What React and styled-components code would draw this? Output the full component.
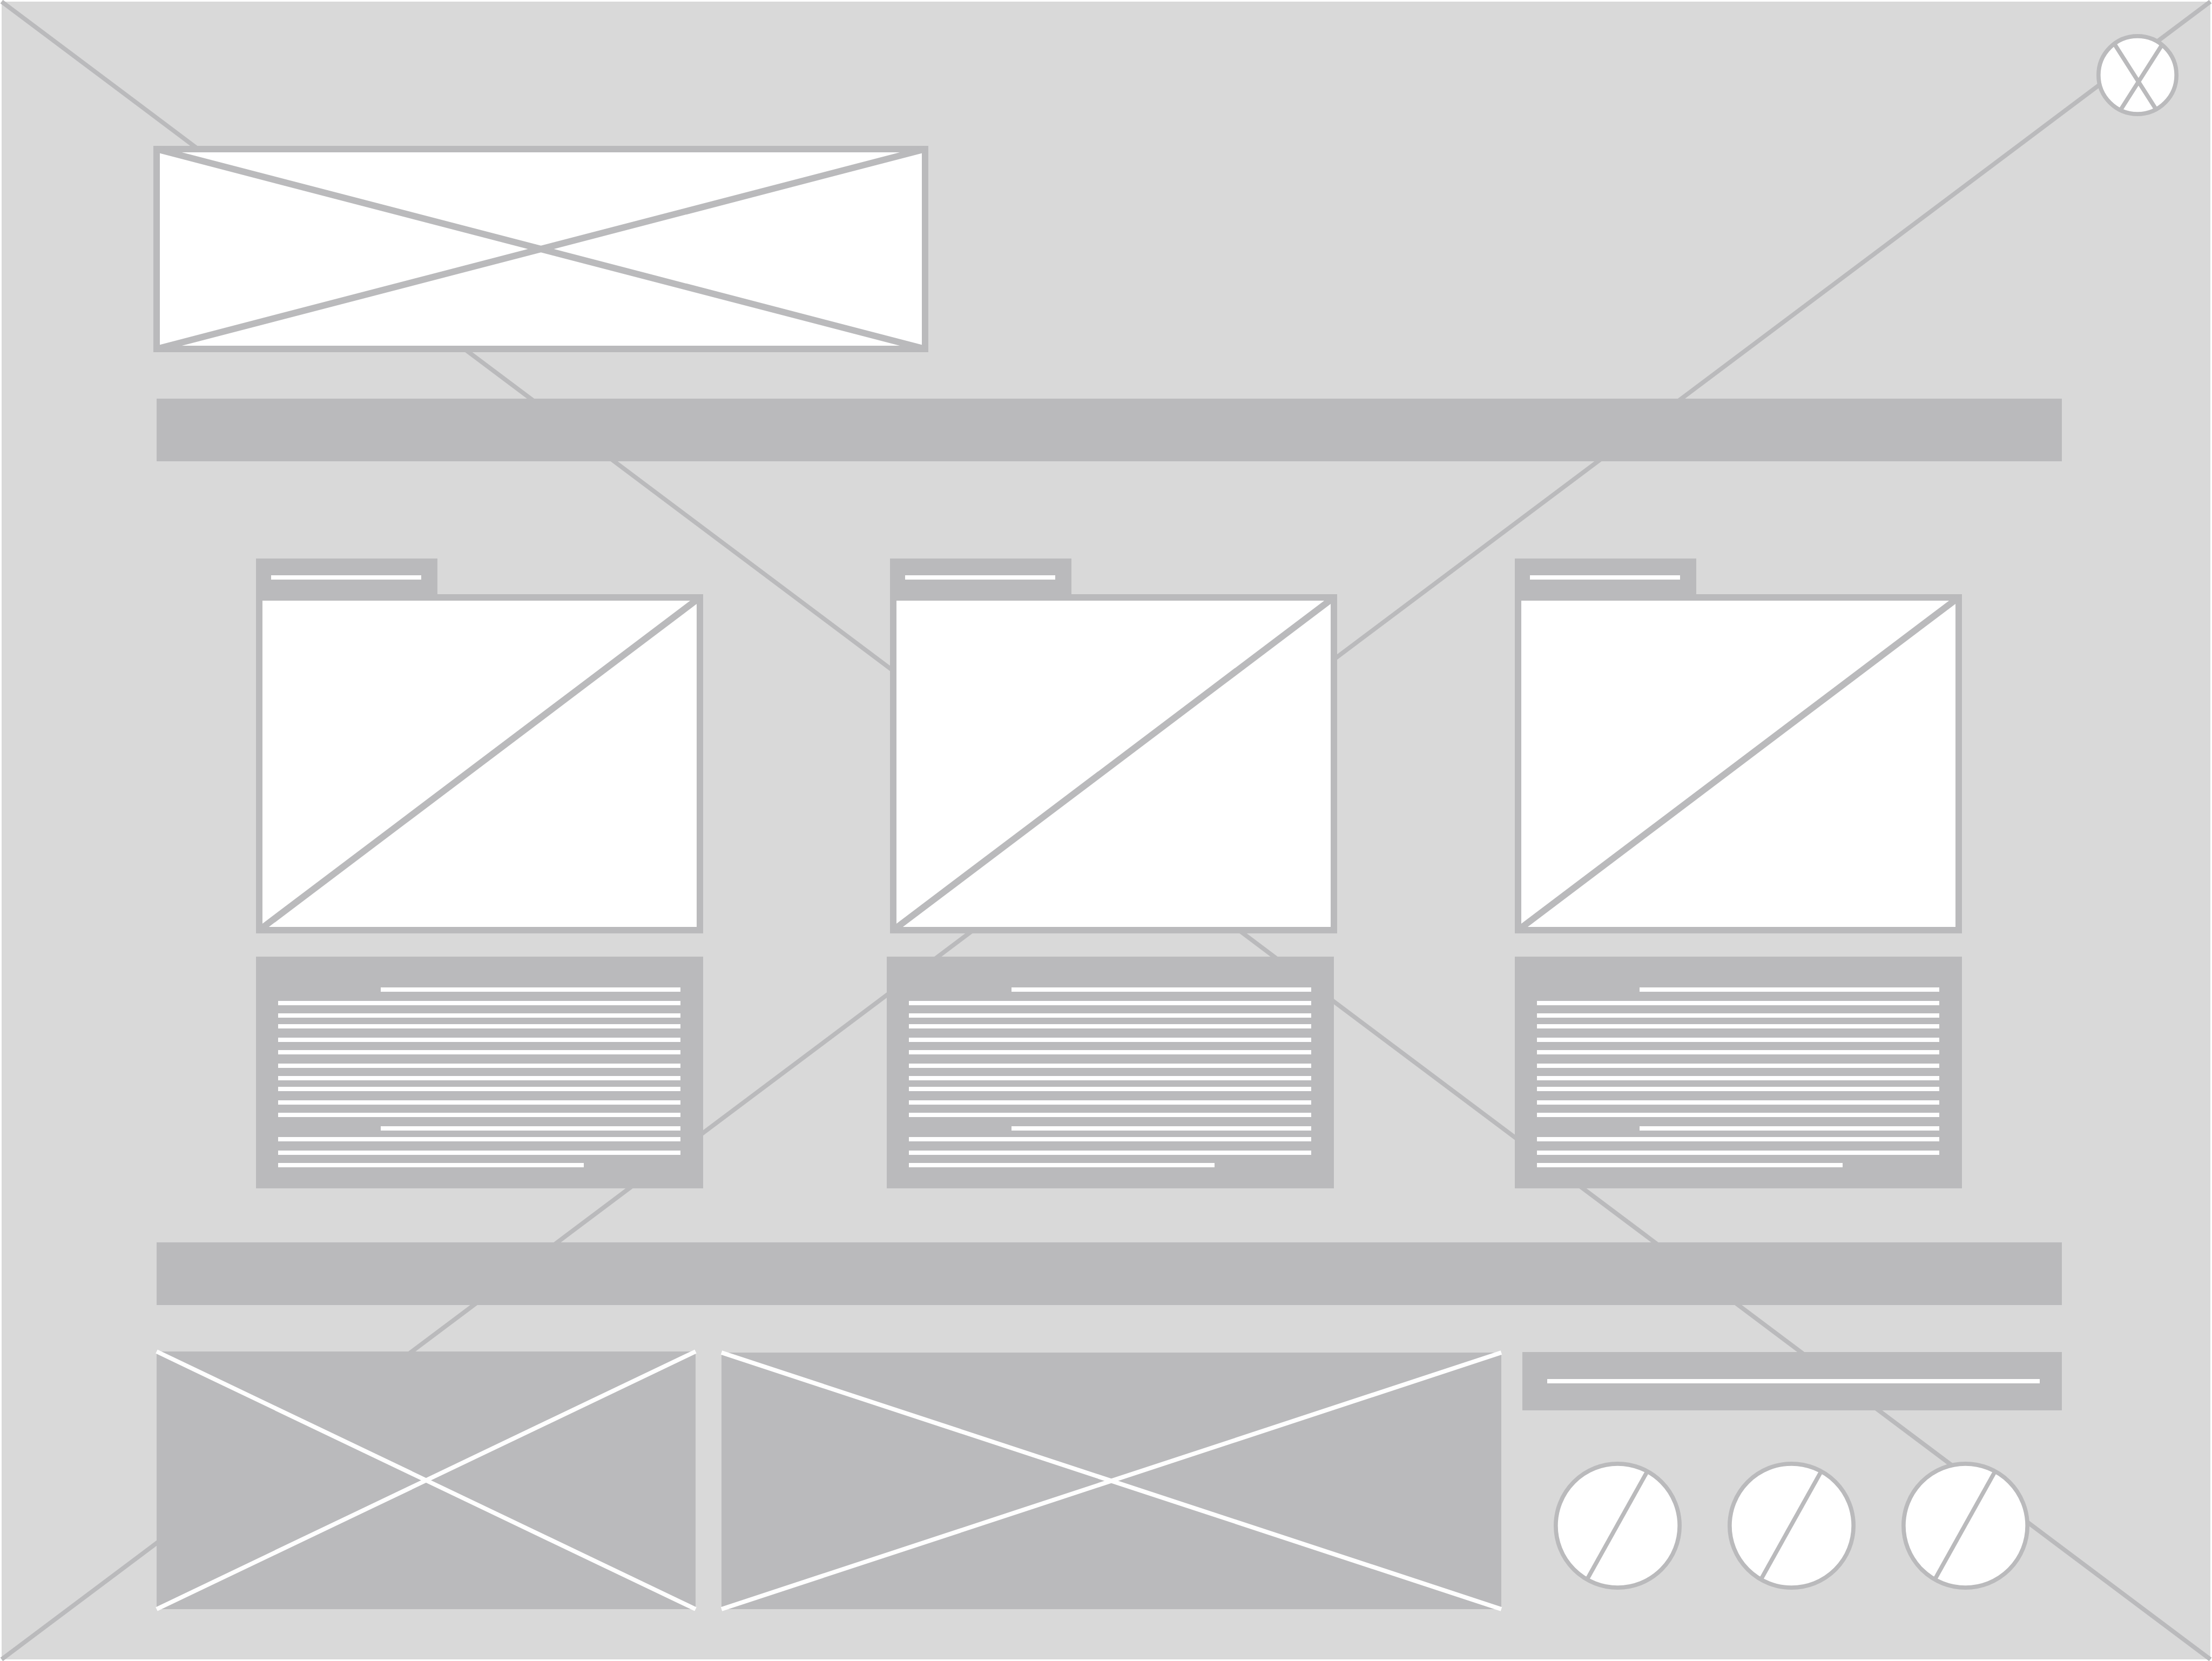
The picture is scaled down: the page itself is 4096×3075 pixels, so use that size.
import React from "react";
import styled, { createGlobalStyle } from "styled-components";

const GREY = "#bababc";
const PAPER = "#d9d9d9";
const WHITE = "#ffffff";

const GlobalStyle = createGlobalStyle`
  *, *::before, *::after { box-sizing: border-box; }
  body { margin: 0; background: ${WHITE}; font-family: "Liberation Sans", sans-serif; }
`;

const Page = styled.div`
  position: relative;
  isolation: isolate;
  display: flex;
  flex-direction: column;
  min-height: 100vh;
  padding: 60px 0 92px;
  border: 3px solid ${WHITE};
  background: ${PAPER};
`;

const Backdrop = styled.svg`
  position: absolute;
  inset: 0;
  z-index: -1;
  width: 100%;
  height: 100%;
  overflow: visible;
`;

const TopBar = styled.header`
  display: flex;
  justify-content: flex-end;
  padding: 0 59px;
`;

const RoundButton = styled.button`
  display: block;
  flex: none;
  width: ${(p) => p.$size}px;
  height: ${(p) => p.$size}px;
  padding: 0;
  border: 0;
  border-radius: 50%;
  background: none;
  cursor: pointer;

  svg { display: block; width: 100%; height: 100%; }
`;

const Main = styled.main`
  display: flex;
  flex-direction: column;
  padding: 61px 275px 0 287px;
`;

const Drawing = styled.svg`
  display: block;
  width: 100%;
  height: 100%;
  overflow: visible;
`;

const Banner = styled.div`
  width: 1423px;
  max-width: 100%;
  height: 370px;
`;

const Strip = styled.div`
  height: 116px;
  margin-top: ${(p) => p.$space}px;
  background: ${GREY};
`;

const Columns = styled.section`
  display: grid;
  grid-template-columns: ${(p) => p.$columns};
  margin-top: ${(p) => p.$space}px;
  padding: 0 185px 0 184px;
`;

const Card = styled.article`
  width: 828px;
`;

const Tab = styled.div`
  width: 336px;
  height: 66px;
  padding: 31px 30px 0 28px;
  background: ${GREY};
`;

const Frame = styled.div`
  height: 628px;
  padding: 6px;
`;

const Panel = styled.article`
  width: 828px;
  padding: 57px 42px 39px 41px;
  background: ${GREY};
`;

const Line = styled.div`
  height: 8px;
  margin: ${(p) => p.$gap || 0}px ${(p) => p.$end || 0}px 0 ${(p) => p.$start || 0}px;
  background: ${WHITE};
`;

const Footer = styled.footer`
  display: grid;
  grid-template-columns: 1046fr 1483fr 999fr;
  align-items: end;
  margin-top: 86px;
`;

const Tile = styled.div`
  height: ${(p) => p.$height}px;
  margin-right: ${(p) => p.$space}px;
  background: ${GREY};
`;

const Contact = styled.div`
  height: 476px;
`;

const Heading = styled.div`
  height: 108px;
  padding: 50px 41px 0 46px;
  background: ${GREY};
`;

const Buttons = styled.nav`
  display: flex;
  justify-content: space-between;
  margin-top: 95px;
  padding: 0 60px 0 58px;
`;

const PARAGRAPH = [
  { $start: 190 },
  { $gap: 17 },
  { $gap: 15 },
  { $gap: 12 },
  { $gap: 17 },
  { $gap: 15 },
  { $gap: 17 },
  { $gap: 15 },
  { $gap: 12 },
  { $gap: 17 },
  { $gap: 15 },
  { $gap: 17, $start: 190 },
  { $gap: 12 },
  { $gap: 17 },
  { $gap: 15, $end: 179 },
];

const ITEMS = ["First", "Second", "Third"];

function Cross({ color, weight, framed, single }) {
  return (
    <Drawing aria-hidden="true" stroke={color} strokeWidth={weight}>
      {framed && <rect width="100%" height="100%" fill={WHITE} />}
      <line x1="0" y1="100%" x2="100%" y2="0" />
      {!single && <line x1="0" y1="0" x2="100%" y2="100%" />}
    </Drawing>
  );
}

function CloseButton() {
  return (
    <RoundButton type="button" $size={152} aria-label="Close">
      <svg viewBox="0 0 159 159" fill="none" stroke={GREY} strokeWidth="8">
        <circle cx="79.5" cy="79.5" r="75.5" fill={WHITE} />
        <path d="M36 21L115 145M127 21L48 145" />
      </svg>
    </RoundButton>
  );
}

function SlashButton({ label }) {
  return (
    <RoundButton type="button" $size={237} aria-label={label}>
      <svg viewBox="0 0 247 247" fill="none" stroke={GREY} strokeWidth="8">
        <circle cx="123.5" cy="123.5" r="119.5" fill={WHITE} />
        <path d="M181 18L65 226" />
      </svg>
    </RoundButton>
  );
}

export default function App() {
  return (
    <>
      <GlobalStyle />
      <Page>
        <Backdrop aria-hidden="true" stroke={GREY} strokeWidth="8">
          <line x1="0" y1="0" x2="100%" y2="100%" />
          <line x1="0" y1="100%" x2="100%" y2="0" />
        </Backdrop>

        <TopBar>
          <CloseButton />
        </TopBar>

        <Main>
          <Banner>
            <Cross color={GREY} weight="12" framed />
          </Banner>

          <Strip $space={92} />

          <Columns $space={180} $columns="1174fr 1157fr 828fr">
            {ITEMS.map((item) => (
              <Card key={item}>
                <Tab>
                  <Line />
                </Tab>
                <Frame>
                  <Cross color={GREY} weight="12" framed single />
                </Frame>
              </Card>
            ))}
          </Columns>

          <Columns $space={43} $columns="1168fr 1163fr 828fr">
            {ITEMS.map((item) => (
              <Panel key={item}>
                {PARAGRAPH.map((line, i) => (
                  <Line key={i} {...line} />
                ))}
              </Panel>
            ))}
          </Columns>

          <Strip $space={100} />

          <Footer>
            <Tile $height={477} $space={48}>
              <Cross color={WHITE} weight="8" />
            </Tile>
            <Tile $height={475} $space={39}>
              <Cross color={WHITE} weight="8" />
            </Tile>
            <Contact>
              <Heading>
                <Line />
              </Heading>
              <Buttons aria-label="Links">
                {ITEMS.map((item) => (
                  <SlashButton key={item} label={item} />
                ))}
              </Buttons>
            </Contact>
          </Footer>
        </Main>
      </Page>
    </>
  );
}
